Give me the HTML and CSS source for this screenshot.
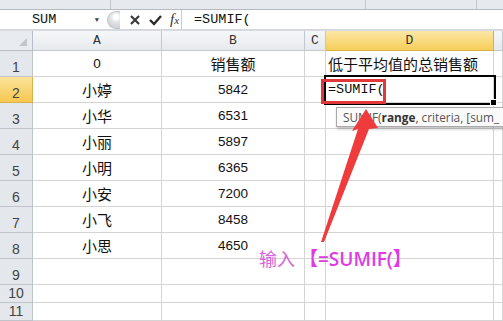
FILE: index.html
```html
<!DOCTYPE html>
<html lang="zh-CN">
<head>
<meta charset="UTF-8" />
<title>SUMIF</title>
<link rel="stylesheet" href="styles.css">
</head>
<body>

<div class="ribbon">
  <div class="ribbon-part wide"></div>
  <div class="ribbon-part"></div>
  <div class="ribbon-part"></div>
</div>

<!-- formula bar -->
<div class="formula-bar">
  <div class="name-box">
    <span class="name">SUM</span>
    <span class="drop">&#9660;</span>
  </div>
  <div class="knob"></div>
  <div class="fx-buttons">
    <svg width="12" height="12" viewBox="0 0 12 12"><path d="M2 2 L10 10 M10 2 L2 10" stroke="#3a3a3a" stroke-width="2.2" fill="none"/></svg>
    <svg width="13" height="12" viewBox="0 0 13 12"><path d="M1 6 L5 10 L12 2" stroke="#2c2c2c" stroke-width="2.4" fill="none"/></svg>
    <span class="fx">f<small>x</small></span>
  </div>
  <div class="formula">=SUMIF(</div>
</div>

<div class="sheet">
  <!-- header row -->
  <div class="corner"><span class="tri"></span></div>
  <div class="col-head">A</div>
  <div class="col-head">B</div>
  <div class="col-head">C</div>
  <div class="col-head active">D</div>
  <div class="col-head"></div>

  <!-- Row 1 -->
  <div class="row-head">1</div>
  <div class="cell num">0</div>
  <div class="cell">销售额</div>
  <div class="cell"></div>
  <div class="cell left">低于平均值的总销售额</div>
  <div class="cell"></div>
  <!-- Row 2 -->
  <div class="row-head active">2</div>
  <div class="cell">小婷</div>
  <div class="cell num">5842</div>
  <div class="cell"></div>
  <div class="cell left selected">
    <span class="typed">=SUMIF(</span>
    <span class="mark"></span>
    <span class="handle"></span>
  </div>
  <div class="cell"></div>
  <!-- Row 3 -->
  <div class="row-head">3</div>
  <div class="cell">小华</div>
  <div class="cell num">6531</div>
  <div class="cell"></div>
  <div class="cell"></div>
  <div class="cell"></div>
  <!-- Row 4 -->
  <div class="row-head">4</div>
  <div class="cell">小丽</div>
  <div class="cell num">5897</div>
  <div class="cell"></div>
  <div class="cell"></div>
  <div class="cell"></div>
  <!-- Row 5 -->
  <div class="row-head">5</div>
  <div class="cell">小明</div>
  <div class="cell num">6365</div>
  <div class="cell"></div>
  <div class="cell"></div>
  <div class="cell"></div>
  <!-- Row 6 -->
  <div class="row-head">6</div>
  <div class="cell">小安</div>
  <div class="cell num">7200</div>
  <div class="cell"></div>
  <div class="cell"></div>
  <div class="cell"></div>
  <!-- Row 7 -->
  <div class="row-head">7</div>
  <div class="cell">小飞</div>
  <div class="cell num">8458</div>
  <div class="cell"></div>
  <div class="cell"></div>
  <div class="cell"></div>
  <!-- Row 8 -->
  <div class="row-head">8</div>
  <div class="cell">小思</div>
  <div class="cell num">4650</div>
  <div class="cell"></div>
  <div class="cell"></div>
  <div class="cell"></div>
  <!-- Row 9 -->
  <div class="row-head">9</div>
  <div class="cell"></div>
  <div class="cell"></div>
  <div class="cell"></div>
  <div class="cell"></div>
  <div class="cell"></div>
  <!-- Row 10 -->
  <div class="row-head">10</div>
  <div class="cell"></div>
  <div class="cell"></div>
  <div class="cell"></div>
  <div class="cell"></div>
  <div class="cell"></div>
  <!-- Row 11 -->
  <div class="row-head">11</div>
  <div class="cell"></div>
  <div class="cell"></div>
  <div class="cell"></div>
  <div class="cell"></div>
  <div class="cell"></div>
</div>

<!-- function tooltip -->
<div class="tip">SUMIF(<b>range</b>, criteria, [sum_</div>

<!-- red arrow annotation -->
<svg class="arrow" width="503" height="321" viewBox="0 0 503 321">
  <polygon points="321,242 358,129 352,131 366,109 378,128 369,129 324,242" fill="#ef3b3b"/>
</svg>

<div class="label">输入<b>【=SUMIF(】</b></div>

</body>
</html>
```

FILE: styles.css
```css
html, body {
  margin: 0;
  width: 100%;
  height: 100%;
  overflow: hidden;
  background: #fff;
  font-family: 'Liberation Sans', Arial, sans-serif;
}

/* strip of ribbon above the formula bar */
.ribbon {
  display: flex;
  height: 9px;
  background: #e6e9ed;
  border-bottom: 1px solid #b4b9c0;
}
.ribbon-part {
  width: 110px;
  border-right: 1px solid #c3c7cc;
}
.ribbon-part.wide {
  width: 110px;
}
.ribbon-part:nth-child(2) {
  width: 254px;
}

.formula-bar {
  display: flex;
  align-items: center;
  height: 19px;
  background: #fff;
  border-bottom: 2px solid #d6dae0;
  font-family: 'Liberation Mono', monospace;
  font-size: 13.5px;
  color: #111;
}
.name-box {
  width: 105px;
  display: flex;
  align-items: center;
}
.name {
  margin-left: 32px;
  flex: 1;
}
.drop {
  font-size: 7px;
  color: #444;
  margin-right: 6px;
}
.knob {
  width: 12px;
  height: 16px;
  margin-left: 2px;
  border: 1px solid #bfc3c8;
  border-right: none;
  border-radius: 9px 0 0 9px;
  background: radial-gradient(circle at 8px 5px, #fff 2px, #e3e5e8 5px, #d0d3d7 10px);
}
.fx-buttons {
  display: flex;
  align-items: center;
  gap: 8px;
  width: 62px;
  padding-left: 9px;
  border-right: 1px solid #c9ccd1;
  height: 19px;
  box-sizing: border-box;
}
.fx {
  font-family: 'Liberation Serif', serif;
  font-style: italic;
  font-size: 15px;
  color: #333;
}
.fx small {
  font-size: 11px;
}
.formula {
  padding-left: 12px;
}

.sheet {
  display: grid;
  grid-template-columns: 33px 129px 143px 21px 168px 1fr;
  grid-template-rows: 20px repeat(9, 26px) 18px 18px;
}

.corner, .col-head, .row-head, .cell {
  box-sizing: border-box;
  border-right: 1px solid #d4d4d4;
  border-bottom: 1px solid #d4d4d4;
}

.corner {
  position: relative;
  background: #e8ebef;
  border-color: #b9bec6;
}
.tri {
  position: absolute;
  right: 5px;
  bottom: 4px;
  width: 0;
  height: 0;
  border-left: 8px solid transparent;
  border-bottom: 8px solid #c2c6cc;
}

.col-head {
  display: flex;
  align-items: center;
  justify-content: center;
  background: linear-gradient(#f6f7f9, #e6e9ed);
  border-color: #c3c8cf;
  font-family: 'Liberation Mono', monospace;
  font-size: 13px;
  color: #333;
}
.col-head.active {
  background: linear-gradient(#fbe7a6, #f6cd59);
  border-color: #d9b149;
}

.row-head {
  display: flex;
  align-items: flex-end;
  justify-content: center;
  padding-bottom: 1px;
  background: #e4e7eb;
  border-color: #bfc4cb;
  font-size: 14px;
  color: #444;
}
.row-head.active {
  background: linear-gradient(#fbe39b, #f5c850);
  border-color: #d9b149;
}

.cell {
  position: relative;
  display: flex;
  align-items: center;
  justify-content: center;
  font-family: 'Liberation Sans', 'Noto Sans CJK SC', sans-serif;
  font-size: 15px;
  color: #111;
}
.cell.num {
  font-size: 13.5px;
}
.cell.left {
  justify-content: flex-start;
  padding-left: 2px;
}

.cell.selected {
  outline: 2px solid #000;
  z-index: 2;
}
.typed {
  font-family: 'Liberation Mono', monospace;
  font-size: 13.5px;
}
.mark {
  position: absolute;
  left: -5px;
  top: 2px;
  width: 65px;
  height: 25px;
  box-sizing: border-box;
  border: 3px solid #e2383b;
}
.handle {
  position: absolute;
  right: -4px;
  bottom: -4px;
  width: 5px;
  height: 5px;
  background: #000;
  border: 1px solid #fff;
}

.tip {
  position: absolute;
  left: 336px;
  right: 0;
  top: 107px;
  height: 20px;
  padding: 0 0 0 6px;
  box-sizing: border-box;
  white-space: nowrap;
  overflow: hidden;
  background: #fafafa;
  border: 1px solid #a9a9a9;
  border-right: none;
  box-shadow: 1px 2px 3px rgba(0, 0, 0, 0.25);
  font-family: 'Open Sans', sans-serif;
  font-size: 11.8px;
  line-height: 18px;
  color: #555;
  z-index: 3;
}
.tip b {
  color: #333;
}

.arrow {
  position: absolute;
  left: 0;
  top: 0;
  z-index: 4;
  pointer-events: none;
}

.label {
  position: absolute;
  left: 259px;
  top: 244px;
  font-family: 'Noto Sans CJK SC', sans-serif;
  font-size: 18px;
  color: #d764d9;
  z-index: 4;
}
.label b {
  font-family: 'Open Sans', 'Noto Sans CJK SC', sans-serif;
  font-weight: 600;
  font-size: 19px;
  color: #e03ae4;
  margin-left: 4px;
}
```
